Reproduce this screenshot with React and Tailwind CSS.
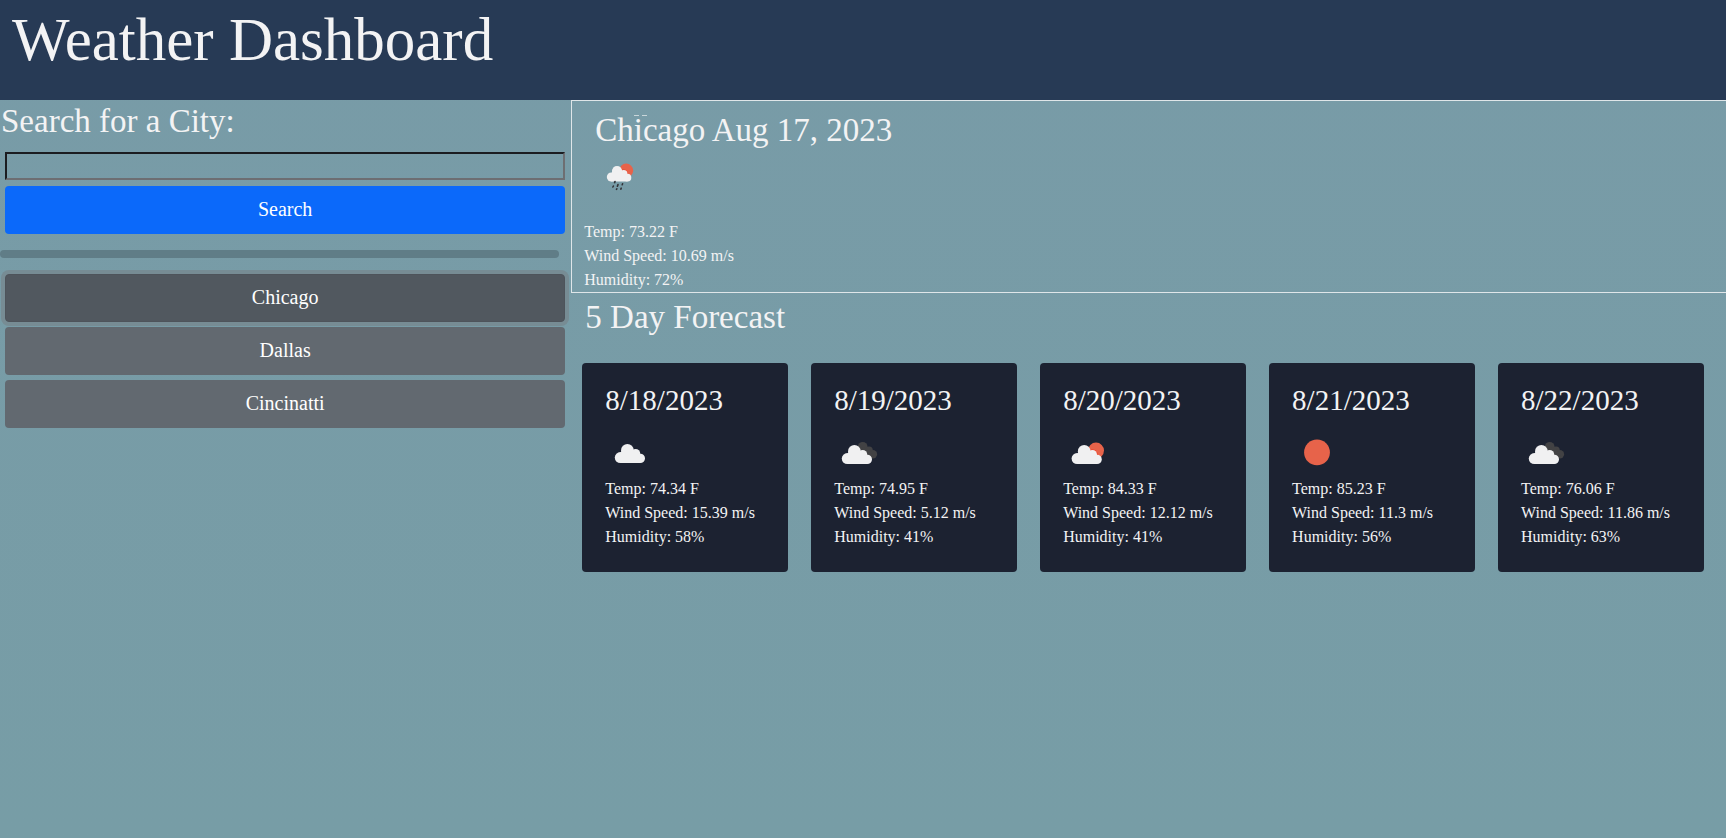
const cities = ['Chicago', 'Dallas', 'Cincinatti'];

const forecast = [
  { date: '8/18/2023', icon: 'cloud', temp: '74.34', wind: '15.39', humidity: 58 },
  { date: '8/19/2023', icon: 'broken', temp: '74.95', wind: '5.12', humidity: 41 },
  { date: '8/20/2023', icon: 'few', temp: '84.33', wind: '12.12', humidity: 41 },
  { date: '8/21/2023', icon: 'clear', temp: '85.23', wind: '11.3', humidity: 56 },
  { date: '8/22/2023', icon: 'broken', temp: '76.06', wind: '11.86', humidity: 63 },
];

function Cloud({ transform }) {
  return (
    <g transform={transform} fill="#f0f0f1">
      <circle cx="5.3" cy="13.6" r="5.5" />
      <circle cx="12.4" cy="6.3" r="6.3" />
      <circle cx="20.6" cy="9.6" r="4.6" />
      <circle cx="25.3" cy="14.4" r="4.7" />
      <path d="M5.3 19.1V9.6L7 6h11l4 4 3.3 5v4.1z" />
    </g>
  );
}

function Sun({ cx, cy, r, edge }) {
  return (
    <g>
      <circle cx={cx} cy={cy} r={r} fill="#e7634a" />
      <g transform={edge} fill="#f0452c">
        <circle cx="20.6" cy="9.6" r="5.4" />
      </g>
    </g>
  );
}

function WeatherIcon({ kind, label }) {
  return (
    <svg className="block h-[50px] w-[50px]" viewBox="0 -1 50 50" role="img" aria-label={label}>
      {kind === 'cloud' && <Cloud transform="translate(10 16)" />}
      {kind === 'broken' && (
        <>
          <g fill="#424244">
            <circle cx="28.7" cy="18.7" r="4.8" />
            <circle cx="35" cy="22.3" r="3.8" />
            <circle cx="38.9" cy="26.2" r="4.2" />
            <path d="M28 20l7-1 5 11-9-1z" />
          </g>
          <Cloud transform="translate(8 17)" />
        </>
      )}
      {kind === 'few' && (
        <>
          <Sun cx="33" cy="22.6" r="8" edge="translate(8.8 17)" />
          <Cloud transform="translate(8.8 17)" />
        </>
      )}
      {kind === 'clear' && <circle cx="25" cy="24.4" r="12.9" fill="#e7634a" />}
      {kind === 'rain' && (
        <>
          <Sun cx="30.2" cy="17.6" r="7" edge="translate(11 13) scale(.81)" />
          <Cloud transform="translate(11 13) scale(.81)" />
          <g stroke="#333338" strokeWidth="1.6" strokeLinecap="round">
            <path d="M19 28.6l-.4 1M17.4 33l-.5 1M22 31.6l-.6 1.6M26.6 30.8l-.4.9M20.8 35.8l-.3.6M25.2 35.2l-.4.9" />
          </g>
        </>
      )}
    </svg>
  );
}

function Readings({ temp, wind, humidity }) {
  return (
    <>
      <p>Temp: {temp} F</p>
      <p>Wind Speed: {wind} m/s</p>
      <p>Humidity: {humidity}%</p>
    </>
  );
}

export default function App() {
  return (
    <div className="min-h-screen bg-linear-to-b from-[#789ba7] to-[#779da6] font-['Liberation_Serif',serif] text-base leading-6 text-[#f3f3f4]">
      <header className="h-[100px] bg-[#273a55] px-3 pt-1">
        <h1 className="text-[61px] leading-[72px]">Weather Dashboard</h1>
      </header>

      <div className="flex">
        <aside className="w-[33.1%] shrink-0">
          <form onSubmit={(e) => e.preventDefault()}>
            <h2 className="mb-3 pt-0.5 pl-px text-[33px] leading-[38px]">
              <label htmlFor="city">Search for a City:</label>
            </h2>
            <div className="flex flex-col gap-1.5 pr-1.5 pl-[5px]">
              <input
                id="city"
                type="text"
                className="h-7 w-full border-2 border-t-[#1b1c20] border-r-[#6d6e72] border-b-[#6d6e72] border-l-[#1b1c20] bg-transparent px-0.5 outline-none"
              />
              <button type="submit" className="h-12 w-full rounded bg-[#0b69fa] pb-0.5 text-xl text-white">
                Search
              </button>
            </div>
          </form>
          <hr className="my-4 mr-3 h-2 rounded border-0 bg-[#607d87]" />
          <div className="flex flex-col gap-[5px] pr-1.5 pl-[5px]">
            {cities.map((city, i) => (
              <button
                key={city}
                type="button"
                className={
                  i === 0
                    ? 'h-12 w-full rounded border border-[#4e545b] bg-[#51585f] pb-0.5 text-xl text-white ring-4 ring-[#778c94]'
                    : 'h-12 w-full rounded bg-[#626970] pb-0.5 text-xl text-white'
                }
              >
                {city}
              </button>
            ))}
          </div>
        </aside>

        <main className="min-w-0 flex-1">
          <section className="relative border border-r-0 border-[#dfe6e9] pt-[9px]">
            <h2 className="pl-[23px] text-[33px] leading-10">Chicago Aug 17, 2023</h2>
            <svg className="absolute top-3.5 left-[62px] h-px w-[13px]" viewBox="0 0 13 1" aria-hidden="true">
              <path d="M0 .5h5M8 .5h5" stroke="#c9d6da" />
            </svg>
            <div className="mt-0.5 mb-[18px] pl-6">
              <WeatherIcon kind="rain" label="rain" />
            </div>
            <div className="pl-3">
              <Readings temp="73.22" wind="10.69" humidity={72} />
            </div>
          </section>

          <section>
            <h2 className="pt-1 pl-3.5 text-[33px] leading-10">5 Day Forecast</h2>
            <div className="mt-[26px] grid grid-cols-5 gap-[23px] pr-[22px] pl-[11px]">
              {forecast.map((day) => (
                <article key={day.date} className="rounded bg-[#1c2231] px-[23px] pt-5 pb-[23px]">
                  <h3 className="mb-2.5 text-[29px] leading-[34px]">{day.date}</h3>
                  <WeatherIcon kind={day.icon} label={day.icon} />
                  <Readings temp={day.temp} wind={day.wind} humidity={day.humidity} />
                </article>
              ))}
            </div>
          </section>
        </main>
      </div>
    </div>
  );
}
